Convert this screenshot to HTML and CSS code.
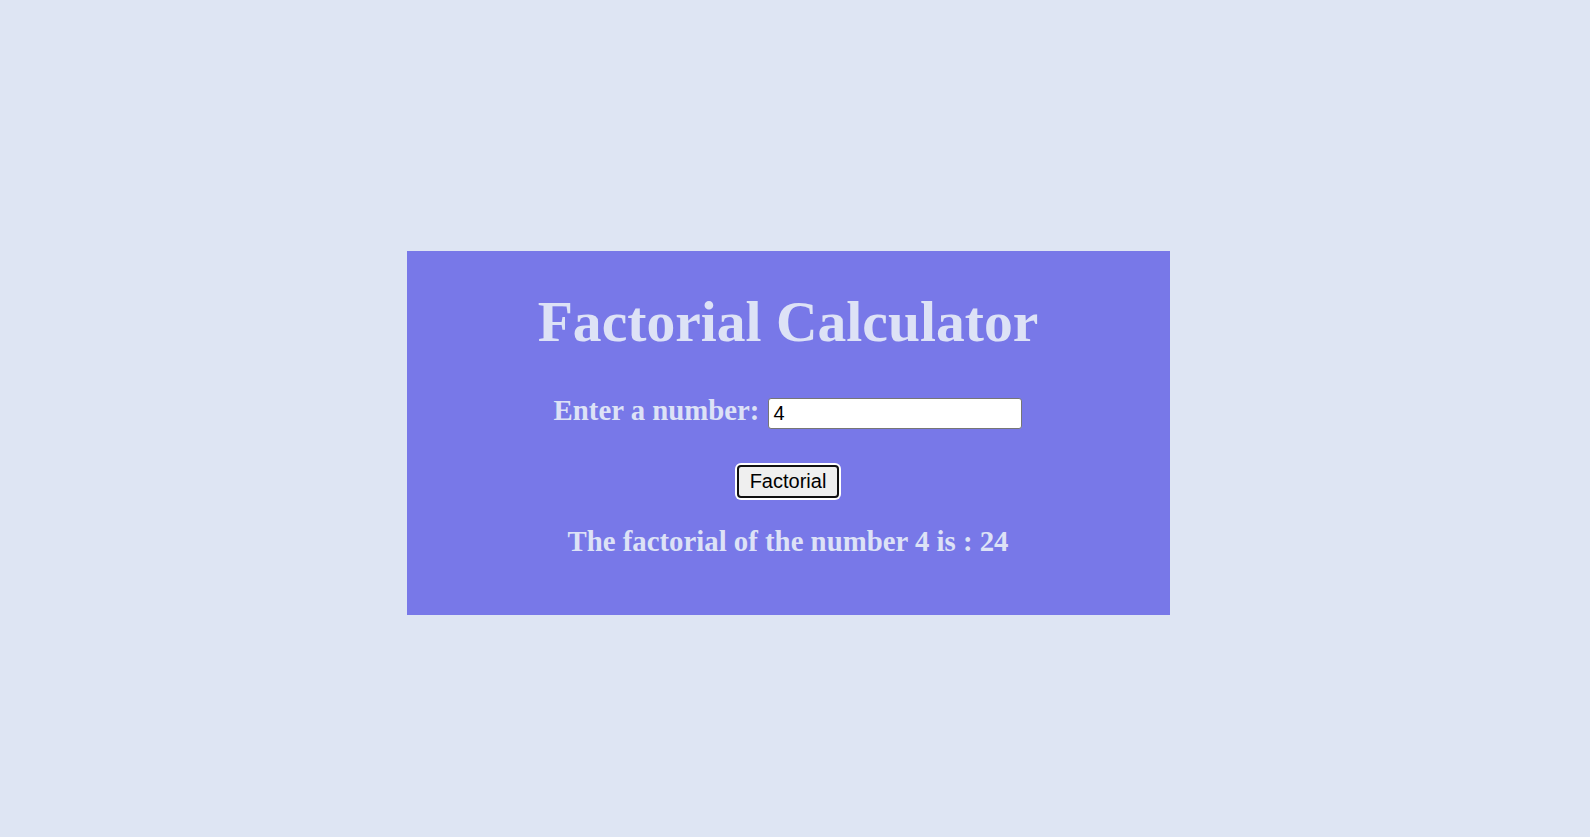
FILE: index.html
```html
<!DOCTYPE html>
<html lang="en">
<head>
<meta charset="utf-8">
<title>Factorial Calculator</title>
<link rel="stylesheet" href="styles.css">
</head>
<body>
<main class="card">
  <h1 class="title">Factorial Calculator</h1>
  <div class="row">
    <label class="label" for="num">Enter a number:</label>
    <input class="input" id="num" type="number" value="4">
  </div>
  <div class="actions">
    <button class="btn" type="button">Factorial</button>
  </div>
  <p class="result">The factorial of the number 4 is : 24</p>
</main>
</body>
</html>
```
FILE: styles.css
```css
html, body {
  margin: 0;
  padding: 0;
}
body {
  background: #dee5f3;
  height: 100vh;
  box-sizing: border-box;
  padding: 28px 14px 0 0;
  display: flex;
  align-items: center;
  justify-content: center;
  font-family: "Liberation Serif", "Times New Roman", serif;
}
.card {
  width: 763px;
  box-sizing: border-box;
  background: #7878e8;
  color: #dde2f6;
  padding: 0 0 57px;
  text-align: center;
}
.title {
  font-size: 57.6px;
  font-weight: bold;
  margin: 38px 0 40px;
  line-height: normal;
}
.row {
  display: flex;
  justify-content: center;
  align-items: baseline;
  gap: 9px;
}
.label {
  font-size: 28.8px;
  font-weight: bold;
  line-height: normal;
}
.input {
  width: 254px;
  height: 31px;
  box-sizing: border-box;
  font-family: "Liberation Sans", Arial, sans-serif;
  font-size: 20px;
  padding: 1px 4px;
  border: 1px solid #767676;
  border-radius: 3px;
  background: #fff;
  color: #000;
  -moz-appearance: textfield;
}
.input::-webkit-outer-spin-button,
.input::-webkit-inner-spin-button {
  -webkit-appearance: none;
  margin: 0;
}
.actions {
  margin-top: 36px;
  display: flex;
  justify-content: center;
}
.btn {
  font-family: "Liberation Sans", Arial, sans-serif;
  font-size: 20px;
  color: #000;
  background: #efefef;
  border: 2px solid #101010;
  border-radius: 4px;
  box-shadow: 0 0 0 2px #ffffff;
  padding: 2px 11px;
  height: 33px;
  box-sizing: border-box;
  line-height: 1;
}
.result {
  font-size: 28.8px;
  font-weight: bold;
  line-height: normal;
  margin: 27px 0 0;
}
```
